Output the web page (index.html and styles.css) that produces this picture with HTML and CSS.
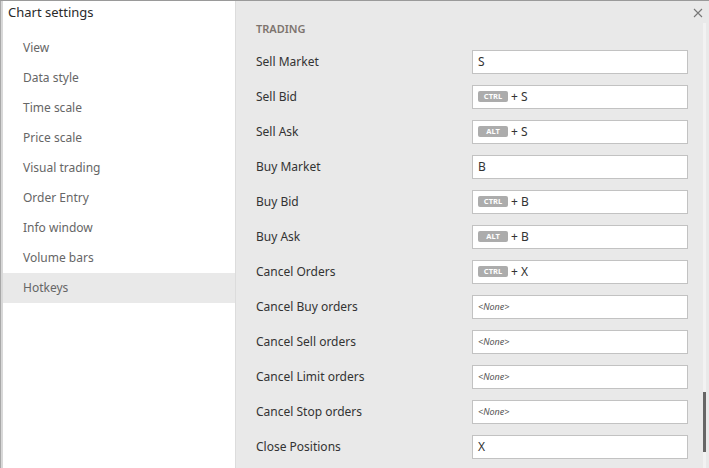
FILE: index.html
```html
<!DOCTYPE html>
<html>
<head>
<meta charset="utf-8">
<link rel="stylesheet" href="styles.css">
</head>
<body>
<div class="window">
  <div class="edge"></div>
  <aside class="sidebar">
    <div class="title">Chart settings</div>
    <nav class="nav">
      <div class="nav-item">View</div>
      <div class="nav-item">Data style</div>
      <div class="nav-item">Time scale</div>
      <div class="nav-item">Price scale</div>
      <div class="nav-item">Visual trading</div>
      <div class="nav-item">Order Entry</div>
      <div class="nav-item">Info window</div>
      <div class="nav-item">Volume bars</div>
      <div class="nav-item active">Hotkeys</div>
    </nav>
  </aside>
  <main class="content">
    <div class="section">TRADING</div>
    <div class="row"><span class="label">Sell Market</span><div class="field">S</div></div>
    <div class="row"><span class="label">Sell Bid</span><div class="field"><span class="key">CTRL</span><span class="plus">+ S</span></div></div>
    <div class="row"><span class="label">Sell Ask</span><div class="field"><span class="key">ALT</span><span class="plus">+ S</span></div></div>
    <div class="row"><span class="label">Buy Market</span><div class="field">B</div></div>
    <div class="row"><span class="label">Buy Bid</span><div class="field"><span class="key">CTRL</span><span class="plus">+ B</span></div></div>
    <div class="row"><span class="label">Buy Ask</span><div class="field"><span class="key">ALT</span><span class="plus">+ B</span></div></div>
    <div class="row"><span class="label">Cancel Orders</span><div class="field"><span class="key">CTRL</span><span class="plus">+ X</span></div></div>
    <div class="row"><span class="label">Cancel Buy orders</span><div class="field none">&lt;None&gt;</div></div>
    <div class="row"><span class="label">Cancel Sell orders</span><div class="field none">&lt;None&gt;</div></div>
    <div class="row"><span class="label">Cancel Limit orders</span><div class="field none">&lt;None&gt;</div></div>
    <div class="row"><span class="label">Cancel Stop orders</span><div class="field none">&lt;None&gt;</div></div>
    <div class="row"><span class="label">Close Positions</span><div class="field">X</div></div>
    <svg class="close" width="10" height="10" viewBox="0 0 10 10"><path d="M1 1L9 9M9 1L1 9" stroke="#777" stroke-width="1.1" fill="none"/></svg>
    <div class="scroll-track"><div class="scroll-thumb"></div></div>
  </main>
</div>
</body>
</html>
```
FILE: styles.css
```css
html, body {
  margin: 0;
  padding: 0;
  height: 100%;
  overflow: hidden;
}
body {
  font-family: "Noto Sans", "Open Sans", sans-serif;
  background: #e9e9e9;
}
.window {
  display: flex;
  height: 468px;
  border-top: 1px solid #9a9a9a;
  box-sizing: border-box;
}
.edge {
  width: 2px;
  border-left: 1px solid #a8a8a8;
  background: #d8d8d8;
  flex: none;
}
.sidebar {
  width: 232px;
  flex: none;
  background: #fff;
  border-right: 1px solid #dcdcdc;
}
.title {
  font-size: 13px;
  color: #2a2a2a;
  padding: 2px 0 0 5px;
  height: 20px;
  line-height: 18px;
}
.nav {
  padding-top: 10px;
}
.nav-item {
  height: 30px;
  line-height: 30px;
  padding-left: 20px;
  font-size: 12px;
  color: #666;
}
.nav-item.active {
  background: #e9e9e9;
}
.content {
  flex: 1;
  position: relative;
  background: #e9e9e9;
  padding: 0 21px 0 20px;
}
.section {
  padding-top: 20px;
  height: 16px;
  line-height: 16px;
  margin-bottom: 7px;
  font-size: 11px;
  font-weight: 600;
  color: #7d746e;
}
.row {
  display: flex;
  align-items: center;
  height: 35px;
}
.label {
  flex: 1;
  font-size: 12px;
  color: #333;
}
.field {
  width: 216px;
  height: 24px;
  box-sizing: border-box;
  border: 1px solid #c2c2c2;
  background: #fff;
  display: flex;
  align-items: center;
  padding-left: 5px;
  font-size: 12px;
  color: #333;
}
.field.none {
  font-style: italic;
  font-size: 9px;
  color: #555;
  padding-left: 5px;
}
.key {
  display: inline-block;
  width: 30px;
  height: 11px;
  line-height: 11px;
  border-radius: 2px;
  background: #acacac;
  color: #fff;
  font-size: 7.5px;
  font-weight: 700;
  text-align: center;
  margin-right: 3px;
}
.plus {
  font-size: 12px;
}
.close {
  position: absolute;
  top: 7px;
  right: 6px;
}
.scroll-track {
  position: absolute;
  top: 22px;
  right: 3px;
  width: 3px;
  bottom: 0;
  background: #f2f2f2;
}
.scroll-thumb {
  position: absolute;
  top: 369px;
  left: 0;
  width: 3px;
  height: 60px;
  background: #666;
}
```
